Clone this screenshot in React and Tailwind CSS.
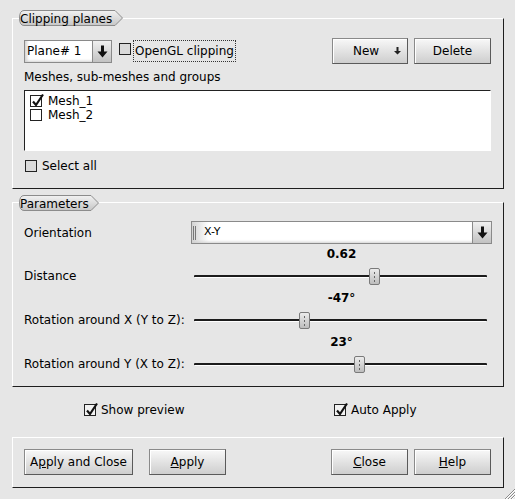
import React from "react";

const DownArrow = ({small}) =>
  small ? (
    <svg width="7" height="8" viewBox="0 0 7 8">
      <path d="M2.5 0h2v4h2.5L3.5 7.5 0 4h2.5z" fill="#222" />
    </svg>
  ) : (
    <svg width="11" height="13" viewBox="0 0 11 13">
      <path d="M4 0.5h3v6h3.5l-5 6-5-6h3.5z" fill="#111" />
    </svg>
  );

const CheckBox = ({checked, bg}) => (
  <span className={`relative inline-block shrink-0 w-[12px] h-[12px] border border-[#222] ${bg}`}>
    {checked && (
      <svg className="absolute left-[0px] top-[-3px]" width="14" height="14" viewBox="0 0 14 14">
        <path d="M2 8.5 L5 12 L12 1.5" stroke="#111" strokeWidth="2.2" fill="none" />
      </svg>
    )}
  </span>
);

const Tab = ({label, w, width, top}) => (
  <div className={`absolute left-[6px] ${top} ${w} h-[16px]`}>
    <svg className="absolute left-0 top-0" width={width} height="16" viewBox={`0 0 ${width} 16`}>
      <defs>
        <linearGradient id={`tg${width}`} x1="0" y1="0" x2="0" y2="1">
          <stop offset="0" stopColor="#f2f2f2" />
          <stop offset="1" stopColor="#c6c6c6" />
        </linearGradient>
      </defs>
      <path
        d={`M5 0.5 H${width - 8} L${width - 0.5} 8 L${width - 8} 15.5 H5 Q0.5 15.5 0.5 8 Q0.5 0.5 5 0.5 Z`}
        fill={`url(#tg${width})`}
        stroke="#8c8c8c"
      />
    </svg>
    <span className="relative pl-[1px] leading-[16px] whitespace-nowrap">{label}</span>
  </div>
);

const Btn = ({w, children}) => (
  <div
    className={`${w} h-[26px] flex items-center justify-center border border-[#8a8a8a] border-b-[#5a5a5a] border-r-[#5a5a5a] bg-linear-to-b from-[#f8f8f8] to-[#cecece] shadow-[inset_1px_1px_0_#ffffff]`}
  >
    {children}
  </div>
);

const Combo = ({w, children}) => (
  <div className={`${w} h-[23px] flex border border-[#8a8a8a] bg-white`}>
    <div className="flex-1 flex items-center bg-linear-to-r from-[#d4d4d4] from-0% via-white via-[6%] to-white shadow-[inset_0_-3px_3px_-2px_#d0d0d0]">
      {children}
    </div>
    <div className="w-[19px] flex items-center justify-center border-l border-[#8a8a8a] bg-linear-to-b from-[#f0f0f0] to-[#c2c2c2]">
      <DownArrow />
    </div>
  </div>
);

const sliders = [
  {label: "Distance", text: "0.62", value: 0.62, min: 0, max: 1},
  {label: "Rotation around X (Y to Z):", text: "-47°", value: -47, min: -180, max: 180},
  {label: "Rotation around Y (X to Z):", text: "23°", value: 23, min: -180, max: 180},
];

const Slider = ({value, min, max}) => {
  const left = 3 + ((value - min) / (max - min)) * 283;
  return (
    <div className="relative w-[301px] h-[22px]">
      <div className="absolute left-[3px] right-[5px] top-[10px] h-[3px] bg-[#1c1c1c] border-b border-white rounded-[1px]" />
      <div
        className="absolute top-[3px] w-[11px] h-[17px] rounded-[2px] border border-[#7a7a7a] bg-linear-to-b from-[#ececec] to-[#bdbdbd] flex flex-col items-center justify-center gap-[2px]"
        style={{left}}
      >
        <span className="w-[1px] h-[2px] bg-[#666]" />
        <span className="w-[1px] h-[2px] bg-[#666]" />
        <span className="w-[1px] h-[2px] bg-[#666]" />
      </div>
    </div>
  );
};

const groupFrame = "relative border border-t-white border-l-white border-r-[#1e1e1e] border-b-[#1e1e1e]";

export default function App() {
  return (
    <div className="relative w-[515px] h-[499px] overflow-hidden bg-[#e6e6e6] text-[12px] text-black font-['DejaVu_Sans',sans-serif]">
      <div className="pl-[12px] pr-[11px] pt-[18px]">
        {/* Clipping planes */}
        <div className={`${groupFrame} h-[171px] pl-[11px] pr-[12px] pt-[19px]`}>
          <Tab label="Clipping planes" w="w-[104px]" width={104} top="top-[-9px]" />
          <div className="flex items-center h-[26px]">
            <Combo w="w-[88px]">
              <span className="pl-[2px]">Plane# 1</span>
            </Combo>
            <span className="ml-[7px]">
              <CheckBox bg="bg-[#dadada]" />
            </span>
            <span className="ml-[2px] h-[22px] leading-[20px] px-[1px] border border-dotted border-[#333]">
              OpenGL clipping
            </span>
            <div className="ml-auto flex gap-[6px]">
              <Btn w="w-[76px]">
                <span className="flex-1 text-center pl-[5px]">New</span>
                <span className="mr-[6px] flex">
                  <DownArrow small />
                </span>
              </Btn>
              <Btn w="w-[77px]">Delete</Btn>
            </div>
          </div>
          <div className="mt-[5px] leading-[16px]">Meshes, sub-meshes and groups</div>
          <div className="mt-[5px] h-[61px] bg-white border border-t-[#222] border-l-[#222] border-r-white border-b-white pl-[5px] pt-[3px]">
            <div className="flex items-center gap-[6px] h-[14px]">
              <CheckBox checked bg="bg-white" />
              <span>Mesh_1</span>
            </div>
            <div className="flex items-center gap-[6px] h-[14px]">
              <CheckBox bg="bg-white" />
              <span>Mesh_2</span>
            </div>
          </div>
          <div className="mt-[8px] ml-[1px] flex items-center gap-[5px] h-[14px]">
            <CheckBox bg="bg-[#dadada]" />
            <span>Select all</span>
          </div>
        </div>

        {/* Parameters */}
        <div className={`${groupFrame} mt-[13px] h-[185px] pl-[11px] pr-[11px] pt-[19px]`}>
          <Tab label="Parameters" w="w-[80px]" width={80} top="top-[-8px]" />
          <div className="flex items-center h-[21px]">
            <span>Orientation</span>
            <div className="ml-auto">
              <Combo w="w-[301px]">
                <span className="ml-[1px] w-[1px] h-[14px] bg-[#777]" />
                <span className="ml-[1px] w-[1px] h-[14px] bg-[#777]" />
                <span className="pl-[8px] text-[11px]">X-Y</span>
              </Combo>
            </div>
          </div>
          {sliders.map((s) => (
            <div key={s.label}>
              <div className="flex">
                <div className="ml-auto w-[301px] h-[22px] leading-[22px] text-center font-bold">{s.text}</div>
              </div>
              <div className="flex items-center h-[22px]">
                <span>{s.label}</span>
                <div className="ml-auto">
                  <Slider value={s.value} min={s.min} max={s.max} />
                </div>
              </div>
            </div>
          ))}
        </div>

        {/* Options */}
        <div className="mt-[14px] h-[18px] grid grid-cols-2">
          <div className="pl-[72px] flex items-center gap-[5px]">
            <CheckBox checked bg="bg-[#f2f2f2]" />
            <span>Show preview</span>
          </div>
          <div className="pl-[76px] flex items-center gap-[5px]">
            <CheckBox checked bg="bg-[#f2f2f2]" />
            <span>Auto Apply</span>
          </div>
        </div>

        {/* Buttons */}
        <div className={`${groupFrame} mt-[18px] h-[51px] pl-[11px] pr-[12px] pt-[11px] flex items-start`}>
          <Btn w="w-[109px]">
            <span>
              A<u>p</u>ply and Close
            </span>
          </Btn>
          <div className="ml-[16px]">
            <Btn w="w-[77px]">
              <span>
                <u>A</u>pply
              </span>
            </Btn>
          </div>
          <div className="ml-auto flex gap-[6px]">
            <Btn w="w-[77px]">
              <span>
                <u>C</u>lose
              </span>
            </Btn>
            <Btn w="w-[77px]">
              <span>
                <u>H</u>elp
              </span>
            </Btn>
          </div>
        </div>
      </div>

      {/* size grip */}
      <svg className="absolute right-0 bottom-0" width="11" height="11" viewBox="0 0 11 11">
        <path d="M11 1 L1 11 M11 4 L4 11 M11 7 L7 11" stroke="#8a8a8a" strokeWidth="1" />
        <path d="M11 2 L2 11 M11 5 L5 11 M11 8 L8 11" stroke="#ffffff" strokeWidth="1" />
      </svg>
    </div>
  );
}
